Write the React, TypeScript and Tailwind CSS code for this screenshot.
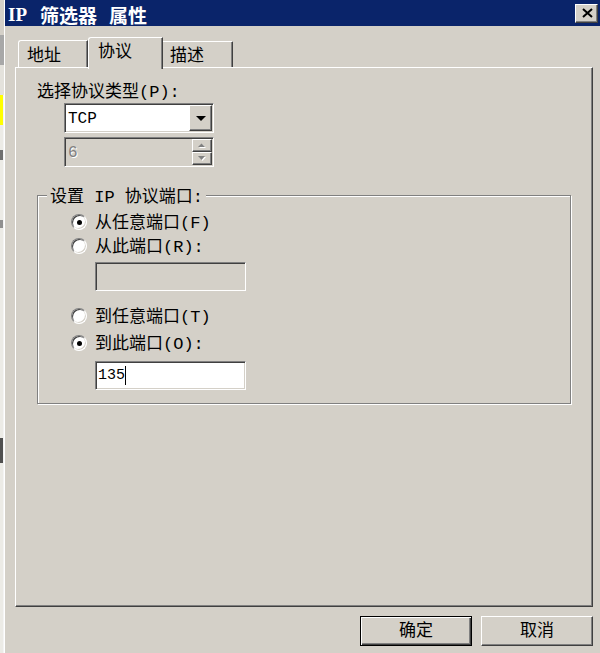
import React from 'react'

const font = "font-['Liberation_Mono','Noto_Sans_CJK_SC',monospace]"
const sunken =
  'border border-t-[#808080] border-l-[#808080] border-b-white border-r-white shadow-[inset_1px_1px_0_#404040,inset_-1px_-1px_0_#d4d0c8]'
const raised =
  'border border-t-white border-l-white border-b-[#404040] border-r-[#404040] shadow-[inset_-1px_-1px_0_#808080]'

function Radio({ checked, label }: { checked?: boolean; label: string }) {
  return (
    <div className="flex items-center h-[24px] pl-[33px]">
      <span className="w-[16px] h-[16px] rounded-full bg-white flex items-center justify-center border border-t-[#808080] border-l-[#808080] border-b-white border-r-white shadow-[inset_1px_1px_0_#404040,inset_-1px_-1px_0_#d4d0c8]">
        {checked && <span className="w-[5px] h-[5px] rounded-full bg-black" />}
      </span>
      <span className="ml-[8px] pt-[4px] text-[17px] leading-[20px]">{label}</span>
    </div>
  )
}

function SmallArrow({ up }: { up?: boolean }) {
  return (
    <svg width="8" height="5" viewBox="0 0 8 5">
      {up ? (
        <>
          <polygon points="1,5 8,5 4.5,1.5" fill="#fff" />
          <polygon points="0,4 7,4 3.5,0.5" fill="#808080" />
        </>
      ) : (
        <>
          <polygon points="1,1 8,1 4.5,5" fill="#fff" />
          <polygon points="0,0 7,0 3.5,4" fill="#808080" />
        </>
      )}
    </svg>
  )
}

export default function App() {
  return (
    <div className={`w-[600px] h-[653px] flex bg-[#d4d0c8] text-black overflow-hidden ${font}`}>
      {/* bit of the window behind */}
      <div className="w-[4px] flex flex-col">
        <div className="h-[35px] bg-[#d4d0c8]" />
        <div className="h-[30px] bg-[#a8a8a8]" />
        <div className="h-[30px] bg-[#e4e2dc]" />
        <div className="h-[30px] flex">
          <div className="w-[3px] bg-[#ffff00]" />
          <div className="w-[1px] bg-[#f4f4f4]" />
        </div>
        <div className="flex-1 flex">
          <div className="w-[3px] flex flex-col bg-[#ecebe6]">
            <div className="h-[25px]" />
            <div className="h-[10px] bg-[#707070]" />
            <div className="h-[60px]" />
            <div className="h-[8px] bg-[#909090]" />
            <div className="h-[210px]" />
            <div className="h-[25px] bg-[#505050]" />
          </div>
          <div className="w-[1px] bg-[#f4f4f4]" />
        </div>
      </div>

      <div className="flex-1 flex flex-col border-l border-white">
        {/* title bar */}
        <div className="h-[26px] bg-[#0a246a] flex items-center pl-[3px] pr-[2px]">
          <div className="flex items-center text-white font-bold text-[19px] leading-[22px] pt-[4px]">
            <span className="font-['Liberation_Serif',serif]">IP</span>
            <span className="ml-[13px] font-['Noto_Sans_CJK_SC',sans-serif]">筛选器</span>
            <span className="ml-[12px] font-['Noto_Sans_CJK_SC',sans-serif]">属性</span>
          </div>
          <div className={`ml-auto w-[23px] h-[19px] bg-[#d4d0c8] flex items-center justify-center pl-[2px] ${raised}`}>
            <svg width="11" height="10" viewBox="0 0 11 10">
              <path d="M1 1 L10 9 M10 1 L1 9" stroke="#000" strokeWidth="2" />
            </svg>
          </div>
        </div>

        {/* body */}
        <div className="flex-1 flex flex-col pl-[10px] pr-[7px] pt-[11px]">
          {/* tabs */}
          <div className="flex items-end h-[32px] -mb-[2px] relative z-10 pl-[3px] text-[17px] leading-[20px]">
            <div className="w-[70px] h-[27px] mb-[2px] bg-[#d4d0c8] border-l border-t border-r border-l-white border-t-white border-r-[#404040] rounded-tl-[3px] shadow-[inset_-1px_0_0_#808080] pl-[8px] pt-[6px]">
              地址
            </div>
            <div className="w-[75px] h-[32px] bg-[#d4d0c8] border-l border-t border-r border-l-white border-t-white border-r-[#404040] rounded-tl-[3px] shadow-[inset_-1px_0_0_#808080] pl-[9px] pt-[5px]">
              协议
            </div>
            <div className="w-[70px] h-[26px] mb-[2px] bg-[#d4d0c8] border-t border-r border-t-white border-r-[#404040] rounded-tr-[1px] shadow-[inset_-1px_0_0_#808080] pl-[7px] pt-[5px]">
              描述
            </div>
          </div>

          {/* tab page */}
          <div className="h-[540px] border border-l-white border-t-white border-r-[#404040] border-b-[#404040] shadow-[inset_-1px_-1px_0_#808080] pt-[13px] pl-[21px]">
            <div className="h-[20px] pt-[2px] text-[17px] leading-[20px]">选择协议类型(P):</div>

            <div className={`ml-[27px] mt-[2px] w-[150px] h-[30px] bg-white p-[1px] flex ${sunken}`}>
              <div className="flex-1 pl-[2px] pt-[1px] flex items-center text-[16px]">TCP</div>
              <div className={`w-[23px] bg-[#d4d0c8] flex items-center justify-center ${raised}`}>
                <svg width="10" height="5" viewBox="0 0 10 5">
                  <polygon points="0,0 10,0 5,5" fill="#000" />
                </svg>
              </div>
            </div>

            <div className={`ml-[27px] mt-[4px] w-[150px] h-[30px] bg-[#d4d0c8] p-[1px] flex ${sunken}`}>
              <div className="flex-1 pl-[2px] pt-[1px] flex items-center text-[16px] text-[#808080] [text-shadow:1px_1px_0_#fff]">6</div>
              <div className="w-[20px] flex flex-col">
                <div className={`h-[13px] bg-[#d4d0c8] flex items-center justify-center ${raised}`}>
                  <SmallArrow up />
                </div>
                <div className={`h-[13px] bg-[#d4d0c8] flex items-center justify-center ${raised}`}>
                  <SmallArrow />
                </div>
              </div>
            </div>

            {/* group box */}
            <div className="mt-[28px] w-[534px] border border-[#808080] shadow-[1px_1px_0_#fff,inset_1px_1px_0_#fff] pb-[13px]">
              <div className="-mt-[11px] ml-[9px] w-fit h-[20px] px-[3px] pt-[3px] bg-[#d4d0c8] text-[17px] leading-[20px]">
                设置 IP 协议端口:
              </div>
              <div className="mt-[5px]">
                <Radio checked label="从任意端口(F)" />
                <Radio label="从此端口(R):" />
              </div>
              <div className={`ml-[57px] mt-[4px] w-[151px] h-[29px] bg-[#d4d0c8] ${sunken}`} />
              <div className="mt-[13px]">
                <Radio label="到任意端口(T)" />
              </div>
              <div className="mt-[3px]">
                <Radio checked label="到此端口(O):" />
              </div>
              <div className={`ml-[57px] mt-[6px] w-[151px] h-[29px] bg-white flex items-center pl-[2px] ${sunken}`}>
                <span className="text-[15px] leading-[18px]">135</span>
                <span className="w-[1px] h-[19px] bg-black" />
              </div>
            </div>
          </div>

          {/* buttons */}
          <div className="mt-[9px] flex justify-end gap-[9px] text-[17px]">
            <div className="w-[112px] h-[30px] pt-[2px] bg-[#d4d0c8] border border-black shadow-[inset_1px_1px_0_#fff,inset_-1px_-1px_0_#404040,inset_-2px_-2px_0_#808080] flex items-center justify-center">
              确定
            </div>
            <div className={`w-[112px] h-[30px] pt-[2px] bg-[#d4d0c8] flex items-center justify-center ${raised}`}>
              取消
            </div>
          </div>
        </div>
      </div>
    </div>
  )
}
